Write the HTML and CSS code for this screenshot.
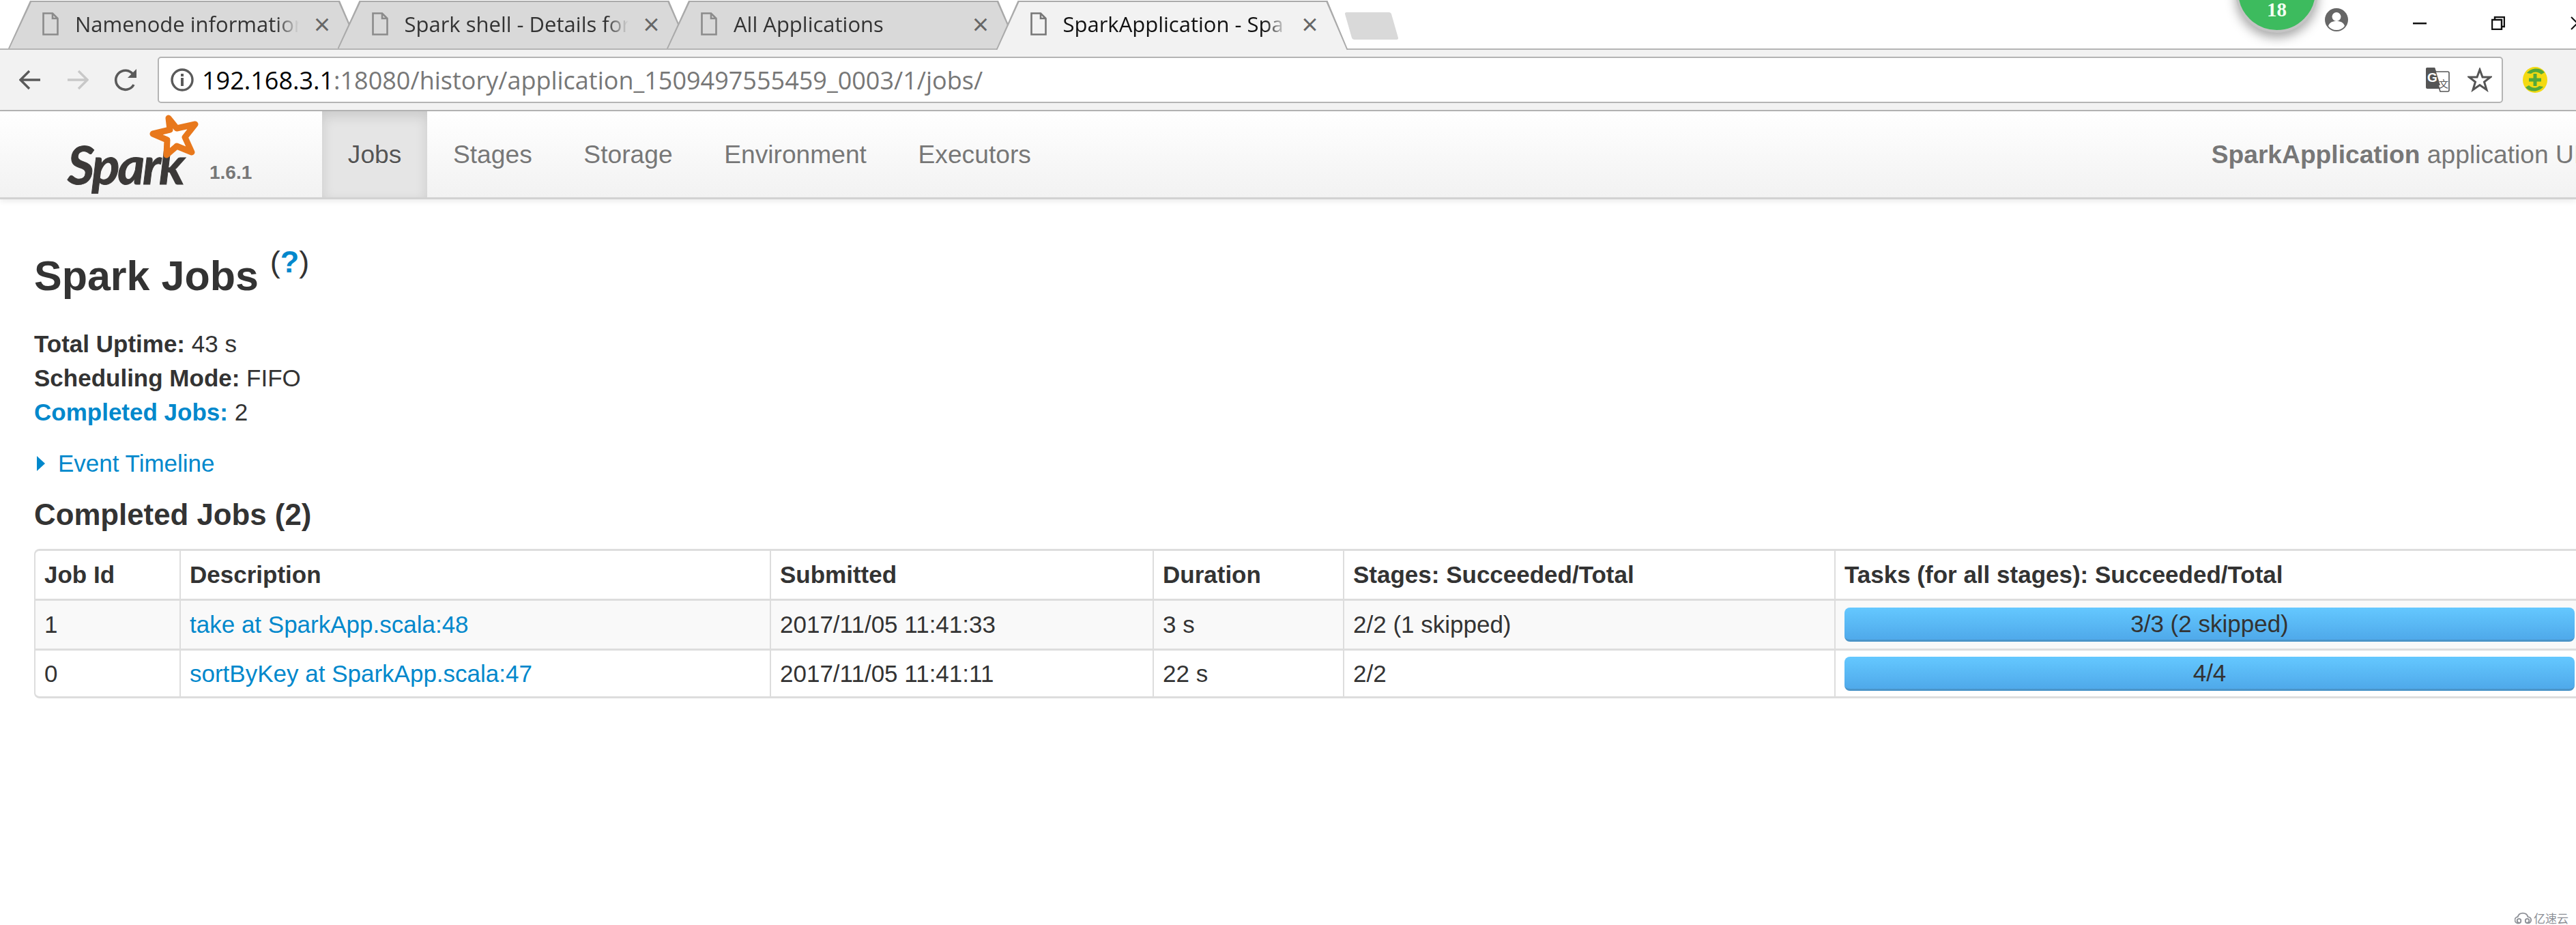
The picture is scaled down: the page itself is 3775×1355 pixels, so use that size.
FILE: index.html
```html
<!DOCTYPE html>
<html lang="en">
<head>
  <meta charset="UTF-8" />
  <title>SparkApplication - Spark Jobs</title>
  <link rel="stylesheet" href="styles.css">
</head>
<body>

  <div class="tabstrip">
    <div class="tab">
      <svg class="doc" viewBox="0 0 24 34"><path d="M1.5 1.5H15L22.5 9V32.5H1.5Z M15 1.5V9H22.5"/></svg>
      <span class="tab-title">Namenode information</span>
      <span class="tab-close">×</span>
    </div>
    <div class="tab">
      <svg class="doc" viewBox="0 0 24 34"><path d="M1.5 1.5H15L22.5 9V32.5H1.5Z M15 1.5V9H22.5"/></svg>
      <span class="tab-title">Spark shell - Details for</span>
      <span class="tab-close">×</span>
    </div>
    <div class="tab">
      <svg class="doc" viewBox="0 0 24 34"><path d="M1.5 1.5H15L22.5 9V32.5H1.5Z M15 1.5V9H22.5"/></svg>
      <span class="tab-title">All Applications</span>
      <span class="tab-close">×</span>
    </div>
    <div class="tab tab-active">
      <svg class="doc" viewBox="0 0 24 34"><path d="M1.5 1.5H15L22.5 9V32.5H1.5Z M15 1.5V9H22.5"/></svg>
      <span class="tab-title">SparkApplication - Spa</span>
      <span class="tab-close">×</span>
    </div>
    <div class="new-tab"></div>

    <div class="badge"><span>18</span></div>
    <svg class="profile" viewBox="0 0 34 34">
      <circle cx="17" cy="17" r="17" fill="#666"/>
      <circle cx="17" cy="12.5" r="6.5" fill="#fff"/>
      <path d="M5 26c2-6 7-7 12-7s10 1 12 7c-3 4-7 6-12 6s-9-2-12-6Z" fill="#fff"/>
    </svg>
    <div class="win-controls">
      <svg class="win-min" viewBox="0 0 20 3"><rect width="20" height="2.5" fill="#111"/></svg>
      <svg class="win-restore" viewBox="0 0 20 20"><path d="M5 5V1H19V15H15M1 5H15V19H1Z" fill="none" stroke="#111" stroke-width="2.4"/></svg>
      <svg class="win-close" viewBox="0 0 20 20"><path d="M1 1L19 19M19 1L1 19" stroke="#111" stroke-width="2"/></svg>
    </div>
  </div>

  <div class="toolbar">
    <svg class="tool-icon back" viewBox="0 0 32 30"><path d="M31 15H3M15 2L2 15L15 28" fill="none" stroke="#5a5a5a" stroke-width="3.4"/></svg>
    <svg class="tool-icon forward" viewBox="0 0 32 30"><path d="M1 15H29M17 2L30 15L17 28" fill="none" stroke="#c8c8c8" stroke-width="3.4"/></svg>
    <svg class="tool-icon reload" viewBox="0 0 36 34"><path d="M29 24a14 14 0 1 1 -1 -15" fill="none" stroke="#5a5a5a" stroke-width="3.6"/><path d="M33 1V14H20Z" fill="#5a5a5a"/></svg>
    <div class="omnibox">
      <svg class="info" viewBox="0 0 34 34"><circle cx="17" cy="17" r="15" fill="none" stroke="#5a5a5a" stroke-width="3.4"/><rect x="15" y="14" width="4" height="12" fill="#5a5a5a"/><rect x="15" y="8" width="4" height="4" fill="#5a5a5a"/></svg>
      <span class="url"><span class="url-host">192.168.3.1</span>:18080/history/application_1509497555459_0003/1/jobs/</span>
      <svg class="translate" viewBox="0 0 36 36">
        <path d="M1 2c0-1 1-2 2-2H14L25 31H3c-1 0-2-1-2-2Z" fill="#555"/>
        <path d="M13 6H33c1 0 2 1 2 2V33c0 1-1 2-2 2H22Z" fill="#fff" stroke="#555" stroke-width="1.6"/>
        <path d="M1 2c0-1 1-2 2-2H14L22 26H3c-1 0-2-1-2-2Z" fill="#555"/>
        <text x="3" y="21" class="translate-g">G</text>
        <text x="20" y="29" class="translate-zh">文</text>
      </svg>
      <svg class="bookmark" viewBox="0 0 36 36"><path d="M18 3L22 14H33.500L24.500 21L28 32.500L18 25.500L8 32.500L11.500 21L2.500 14H14Z" fill="none" stroke="#555" stroke-width="3"/></svg>
    </div>
    <svg class="ext" viewBox="0 0 36 38">
      <ellipse cx="18" cy="19" rx="18" ry="19" fill="#f4da12"/>
      <path d="M6 9C12 1 25 0 32 8L27 11C23 7 17 6 12 10Z" fill="#53a83b"/>
      <path d="M30 29C24 37 11 38 4 30L9 27C13 31 19 32 24 28Z" fill="#53a83b"/>
      <path d="M15.500 10H20.500V16.500H27V21.500H20.500V28H15.500V21.500H9V16.500H15.500Z" fill="#53a83b"/>
    </svg>
  </div>

  <nav class="navbar">
    <div class="brand">
      <div class="logo">
        <span class="logo-word">Spark</span>
        <svg class="logo-star" viewBox="0 0 76 66"><path d="M29 6L41 21L68 15L53 34L63 56L41 47L26 60L27 38L6 29L31 23Z" fill="#fff" stroke="#e8781c" stroke-width="9" stroke-linejoin="round"/></svg>
      </div>
      <span class="version">1.6.1</span>
    </div>
    <a class="nav-item nav-active">Jobs</a>
    <a class="nav-item">Stages</a>
    <a class="nav-item">Storage</a>
    <a class="nav-item">Environment</a>
    <a class="nav-item">Executors</a>
    <p class="app-name"><strong>SparkApplication</strong> application UI</p>
  </nav>

  <main>
    <h3 class="page-title">Spark Jobs <sup class="help">(<a>?</a>)</sup></h3>
    <ul class="summary">
      <li><strong>Total Uptime:</strong> 43 s</li>
      <li><strong>Scheduling Mode:</strong> FIFO</li>
      <li><a><strong>Completed Jobs:</strong></a> 2</li>
    </ul>
    <div class="timeline"><span class="arrow"></span><a>Event Timeline</a></div>
    <h4 class="section-title">Completed Jobs (2)</h4>

    <table class="jobs">
      <colgroup>
        <col class="c-id"><col class="c-desc"><col class="c-sub"><col class="c-dur"><col class="c-stages"><col class="c-tasks">
      </colgroup>
      <thead>
        <tr><th>Job Id</th><th>Description</th><th>Submitted</th><th>Duration</th><th>Stages: Succeeded/Total</th><th>Tasks (for all stages): Succeeded/Total</th></tr>
      </thead>
      <tbody>
        <tr class="odd">
          <td>1</td><td><a>take at SparkApp.scala:48</a></td><td>2017/11/05 11:41:33</td><td>3 s</td><td>2/2 (1 skipped)</td>
          <td><div class="progress">3/3 (2 skipped)</div></td>
        </tr>
        <tr>
          <td>0</td><td><a>sortByKey at SparkApp.scala:47</a></td><td>2017/11/05 11:41:11</td><td>22 s</td><td>2/2</td>
          <td><div class="progress">4/4</div></td>
        </tr>
      </tbody>
    </table>
  </main>

  <div class="watermark">
    <svg viewBox="0 0 28 18"><path d="M6 17a5 5 0 0 1-1-10c1-4 4-6 8-6s7 2 8 6a5 5 0 0 1 0 10c-3 0-4-2-4-4a3 3 0 1 1 3 3M6 17c3 0 4-2 4-4a3 3 0 1 0-3 3" fill="none" stroke="#8c8f96" stroke-width="2"/></svg>
    <span>亿速云</span>
  </div>

</body>
</html>
```

FILE: styles.css
```css
html, body { margin: 0; padding: 0; height: 100%; overflow: hidden; }
body {
  width: 3775px; height: 1355px;
  position: relative;
  background: #fff; color: #333;
  font-family: "Liberation Sans", Arial, sans-serif;
}

/* browser chrome */
.tabstrip {
  position: relative;
  display: flex; align-items: flex-start;
  height: 71px; padding-left: 12px; box-sizing: border-box;
  background: #fff;
}
.tab {
  position: relative; flex: 0 0 516px;
  display: flex; align-items: center;
  height: 71px; margin-right: -33.5px; padding: 0 0 2px 50px; box-sizing: border-box;
  background: #a9a9a9;
  clip-path: polygon(0 100%, 32px 1px, 486px 1px, 516px 100%);
  font-family: "Open Sans", sans-serif; font-size: 31px; color: #333;
}
.tab::before {
  content: ""; position: absolute; inset: 0;
  background: #d9d9d9;
  clip-path: polygon(2px 100%, 34px 3px, 484px 3px, 514px 100%);
}
.tab-active { z-index: 2; background: #aaa; height: 73px; padding-bottom: 4px; color: #111; }
.tab-active::before { background: #f2f2f2; }
.doc {
  position: relative; width: 24px; height: 34px; flex: none;
  fill: none; stroke: #8b8b8b; stroke-width: 2.6;
}
.tab-active .doc { stroke: #777; }
.tab-title {
  position: relative; width: 328px; margin-left: 24px; flex: none;
  overflow: hidden; white-space: nowrap;
  -webkit-mask-image: linear-gradient(to right, #000 90%, transparent 100%);
}
.tab-close {
  position: relative; margin-left: 22px;
  font-size: 42px; line-height: 1; color: #666;
}
.new-tab {
  width: 68px; height: 40px; margin: 18px 0 0 34px; flex: none;
  background: #d9d9d9; transform: skewX(16deg); border-radius: 3px;
}
.badge {
  position: absolute; left: 3276px; top: -73px; z-index: 3;
  width: 121px; height: 121px; box-sizing: border-box;
  display: flex; align-items: flex-end; justify-content: center;
  padding-bottom: 13px;
  background: #3dbb5e; border: 4px solid #c4c4c4; border-radius: 50%;
  box-shadow: 0 7px 16px rgba(0,0,0,0.35);
  font-family: "Liberation Serif", serif; font-weight: bold; font-size: 29px; color: #f2fff2;
}
.profile { position: absolute; left: 3407px; top: 12px; width: 34px; height: 34px; }
.win-controls svg { position: absolute; }
.win-min { left: 3536px; top: 33px; width: 20px; height: 3px; }
.win-restore { left: 3651px; top: 24px; width: 20px; height: 20px; }
.win-close { left: 3767px; top: 24px; width: 20px; height: 20px; }

.toolbar {
  display: flex; align-items: center;
  height: 92px; padding-left: 28px; box-sizing: border-box;
  background: #f2f2f2;
  border-top: 2px solid #b4b4b4; border-bottom: 2px solid #b4b4b4;
}
.tool-icon { flex: none; height: 30px; }
.back { width: 32px; }
.forward { width: 32px; margin-left: 38px; }
.reload { width: 36px; height: 34px; margin-left: 37px; }
.omnibox {
  display: flex; align-items: center;
  width: 3437px; height: 68px; margin-left: 28px; padding-left: 17px; box-sizing: border-box;
  background: #fff; border: 2px solid #b4b4b4; border-radius: 5px;
}
.info { width: 34px; height: 34px; flex: none; }
.url {
  margin-left: 12px; font-family: "Open Sans", sans-serif; font-size: 36px;
  color: #777; white-space: nowrap;
}
.url-host { color: #000; }
.translate { width: 36px; height: 36px; margin-left: auto; flex: none; }
.translate-g { font: bold 19px "Liberation Sans", sans-serif; fill: #fff; }
.translate-zh { font: 14px "Noto Sans CJK SC", sans-serif; fill: #555; }
.bookmark { width: 36px; height: 36px; margin: 0 14px 0 26px; flex: none; }
.ext { width: 36px; height: 38px; margin-left: 29px; flex: none; }

/* spark navbar */
.navbar {
  display: flex; align-items: stretch;
  height: 129px; box-sizing: border-box;
  background: linear-gradient(#fff, #f2f2f2);
  border-bottom: 3px solid #d2d2d2;
  box-shadow: 0 3px 8px rgba(0,0,0,0.08);
  color: #777; font-size: 37.200px;
}
.brand { position: relative; flex: 0 0 472px; box-sizing: border-box; padding-left: 99px; }
.logo { position: relative; width: 190px; height: 126px; }
.logo-word {
  position: absolute; left: 0; top: 32px;
  font-family: "Lato", sans-serif; font-weight: bold; font-style: italic;
  font-size: 76px; color: #3b3938; letter-spacing: -3px;
  -webkit-text-stroke: 1px #3b3938;
}
.logo-star { position: absolute; left: 119px; top: 4px; width: 76px; height: 66px; }
.version {
  position: absolute; left: 307px; top: 74px;
  font-weight: bold; font-size: 28px; color: #777;
}
.nav-item {
  display: flex; align-items: center;
  padding: 1px 37.800px 0; height: 126px; box-sizing: border-box;
  color: #777; text-shadow: 0 1px 0 #fff;
}
.nav-active {
  background: #e5e5e5; color: #555;
  box-shadow: inset 0 7px 18px rgba(0,0,0,0.12);
}
.app-name {
  margin: 0 0 0 1692px; flex: none; align-self: center;
  white-space: nowrap;
}

/* page */
main { padding: 0 0 0 50px; font-size: 35px; }
a { color: #0088cc; }
.page-title {
  margin: 0; padding-top: 76px; font-size: 61px; line-height: 72px;
}
.help { font-size: 45px; font-weight: normal; line-height: 0; vertical-align: 26px; }
.help a { font-weight: bold; }
.summary { list-style: none; margin: 39px 0 0; padding: 0; line-height: 50px; }
.timeline {
  display: flex; align-items: center; gap: 19px;
  margin-top: 25px; padding-left: 4px; line-height: 50px;
}
.arrow {
  width: 0; height: 0;
  border-left: 12px solid #0088cc; border-top: 11px solid transparent; border-bottom: 11px solid transparent;
}
.section-title { margin: 26px 0 0; font-size: 43.800px; line-height: 48px; }

.jobs {
  margin-top: 26px; width: 3736px; table-layout: fixed;
  border-collapse: separate; border-spacing: 0;
}
.c-id { width: 213px; }
.c-desc { width: 865px; }
.c-sub { width: 561px; }
.c-dur { width: 279px; }
.c-stages { width: 720px; }
.jobs th, .jobs td {
  padding: 0 13px; box-sizing: border-box;
  border-top: 3px solid #ddd; border-left: 2px solid #ddd;
  text-align: left; white-space: nowrap;
}
.jobs tbody tr:last-child td { border-bottom: 3px solid #ddd; }
.jobs thead th { height: 73px; }
.jobs tbody td { height: 73px; }
.jobs thead th:first-child { border-top-left-radius: 8px; }
.jobs tbody tr:last-child td:first-child { border-bottom-left-radius: 8px; }
.jobs tr.odd td { background: #f9f9f9; }
.progress {
  height: 50px; box-sizing: border-box;
  background: linear-gradient(#64c8ff, #4fa9ea);
  border-bottom: 3px solid #4a94c8; border-radius: 8px;
  text-align: center; line-height: 47px;
}

.watermark {
  position: absolute; left: 3685px; top: 1332px;
  display: flex; align-items: center; gap: 2px;
  font-family: "Noto Sans CJK SC", sans-serif; font-size: 17px; color: #8c8f96;
}
.watermark svg { width: 26px; height: 18px; }
```
